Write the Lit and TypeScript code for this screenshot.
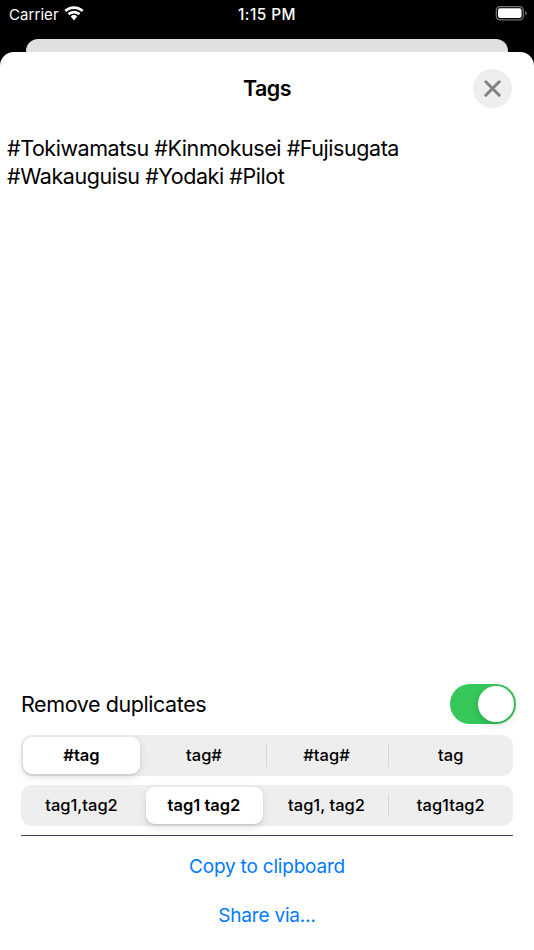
import { LitElement, html, css } from "lit";
import { customElement, property, state } from "lit/decorators.js";
import { classMap } from "lit/directives/class-map.js";

@customElement("status-bar")
class StatusBar extends LitElement {
  static styles = css`
    :host {
      display: grid;
      grid-template-columns: 1fr auto 1fr;
      align-items: center;
      height: 27px;
      padding: 0 7px 0 9px;
      color: #fff;
      font-size: 15px;
    }
    .left { display: flex; align-items: center; gap: 5px; letter-spacing: 0.06px; }
    .time { margin-right: 2px; font-size: 15.3px; font-weight: 500; letter-spacing: 0.5px; }
    .left span, .time { padding-top: 1px; }
    .battery { justify-self: end; }
    svg { display: block; }
  `;
  render() {
    return html`
      <div class="left">
        <span>Carrier</span>
        <svg width="20" height="15" viewBox="0 0 20 15" fill="#fff">
          <path d="M10 0.2C13.7 0.2 17.1 1.6 19.6 4.1L17.7 6C15.6 4.1 13 3 10 3S4.4 4.1 2.3 6L0.4 4.1C2.9 1.6 6.3 0.2 10 0.2Z" />
          <path d="M10 4.7C12.4 4.7 14.7 5.6 16.4 7.3L14.5 9.2C13.2 8.1 11.7 7.4 10 7.4S6.8 8.1 5.5 9.2L3.6 7.3C5.3 5.6 7.6 4.7 10 4.7Z" />
          <path d="M10 9.1C11.2 9.1 12.3 9.6 13.2 10.5L10.4 13.9Q10 14.4 9.6 13.9L6.8 10.5C7.7 9.6 8.8 9.1 10 9.1Z" />
        </svg>
      </div>
      <span class="time">1:15 PM</span>
      <svg class="battery" width="32" height="15" viewBox="0 0 32 15">
        <rect x="1.3" y="0.6" width="27" height="13.2" rx="3.6" fill="none" stroke="#777" stroke-width="1.2" />
        <rect x="3" y="2.3" width="23.6" height="9.8" rx="2" fill="#fff" />
        <path d="M30.2 4.9Q31.8 5.7 31.8 7.2T30.2 9.5Z" fill="#777" />
      </svg>
    `;
  }
}

@customElement("segmented-control")
class SegmentedControl extends LitElement {
  @property({ attribute: false }) options: string[] = [];
  @property({ type: Number }) selected = 0;

  static styles = css`
    :host {
      display: grid;
      grid-template-columns: 122.5px 122.5px 122.5px 1fr;
      box-sizing: border-box;
      height: 41px;
      border-radius: 11px;
      background: #eeeeee;
      color: #000;
      font-size: 16.5px;
    }
    button {
      position: relative;
      margin: 2px 3.5px 2px 2px;
      padding: 0 0 1px;
      border: 0;
      border-radius: 9px;
      background: none;
      color: inherit;
      font: inherit;
      font-weight: 500;
      white-space: pre;
    }
    button:last-child { margin-right: 2px; }
    .on {
      background: #fff;
      font-weight: 600;
      box-shadow: 0 3px 8px rgba(0, 0, 0, 0.12), 0 2px 2px rgba(0, 0, 0, 0.06);
    }
    .divided::after {
      content: "";
      position: absolute;
      right: -4px;
      top: 7px;
      width: 1px;
      height: 23px;
      background: #d6d6d7;
    }
  `;
  render() {
    return this.options.map((label, i) => html`
      <button
        class=${classMap({
          on: i === this.selected,
          divided: i < this.options.length - 1 && i !== this.selected && i + 1 !== this.selected,
        })}
        @click=${() => (this.selected = i)}
      >${label}</button>
    `);
  }
}

@customElement("app-root")
class AppRoot extends LitElement {
  @state() private unique = true;

  static styles = css`
    :host {
      display: flex;
      flex-direction: column;
      height: 950px;
      background: #000;
      color: #000;
      font-family: Inter, "Liberation Sans", sans-serif;
      overflow: hidden;
    }
    .behind {
      flex: none;
      height: 13px;
      margin: 12px 26px 0;
      border-radius: 12px 12px 0 0;
      background: #e0e0e0;
    }
    .sheet {
      flex: 1;
      display: flex;
      flex-direction: column;
      border-radius: 14px 14px 0 0;
      background: #fff;
    }
    header {
      display: grid;
      grid-template-columns: 1fr auto 1fr;
      align-items: center;
      height: 74px;
      padding: 0 22px;
    }
    h1 { grid-column: 2; margin: 0 0 2px; font-size: 21.5px; font-weight: 600; letter-spacing: -0.5px; }
    .close {
      justify-self: end;
      display: grid;
      place-items: center;
      width: 39px;
      height: 39px;
      margin-bottom: 1px;
      padding: 0;
      border: 0;
      border-radius: 50%;
      background: #eeeeee;
    }
    .tags {
      flex: 1;
      margin: 0;
      padding: 8px 7px;
      font-size: 21.5px;
      line-height: 28px;
      letter-spacing: -0.45px;
    }
    .controls { display: flex; flex-direction: column; padding: 0 21px; }
    .row {
      display: flex;
      align-items: center;
      justify-content: space-between;
      height: 40px;
      margin: 0 -3px 10.5px 0;
      font-size: 21.5px;
      letter-spacing: -0.42px;
    }
    .switch {
      display: flex;
      justify-content: flex-end;
      box-sizing: border-box;
      width: 66px;
      height: 40px;
      padding: 2px;
      border: 0;
      border-radius: 20px;
      background: #35c759;
    }
    .switch.off { justify-content: flex-start; background: #e9e9ea; }
    .knob {
      width: 36px;
      height: 36px;
      border-radius: 50%;
      background: #fff;
      box-shadow: 0 3px 8px rgba(0, 0, 0, 0.15);
    }
    segmented-control + segmented-control { margin-top: 9px; }
    hr { width: 100%; height: 1px; margin: 9.5px 0 0; border: 0; background: #3b4358; }
    .link {
      height: 49px;
      padding: 0;
      border: 0;
      background: none;
      color: #007aff;
      font: inherit;
      font-size: 19px;
      letter-spacing: -0.2px;
    }
    .links { display: flex; flex-direction: column; padding: 6px 0 10px; }
  `;
  render() {
    return html`
      <status-bar></status-bar>
      <div class="behind"></div>
      <main class="sheet">
        <header>
          <h1>Tags</h1>
          <button class="close" aria-label="Close">
            <svg width="17" height="17" viewBox="0 0 17 17">
              <path d="M1.8 1.8L15.2 15.2M15.2 1.8L1.8 15.2" stroke="#828286" stroke-width="3" stroke-linecap="round" />
            </svg>
          </button>
        </header>
        <p class="tags">#Tokiwamatsu #Kinmokusei #Fujisugata<br />#Wakauguisu #Yodaki #Pilot</p>
        <section class="controls">
          <div class="row">
            <span>Remove duplicates</span>
            <button
              class=${classMap({ switch: true, off: !this.unique })}
              aria-label="Remove duplicates"
              @click=${() => (this.unique = !this.unique)}
            ><span class="knob"></span></button>
          </div>
          <segmented-control .options=${["#tag", "tag#", "#tag#", "tag"]} .selected=${0}></segmented-control>
          <segmented-control .options=${["tag1,tag2", "tag1 tag2", "tag1, tag2", "tag1tag2"]} .selected=${1}></segmented-control>
          <hr />
          <div class="links">
            <button class="link">Copy to clipboard</button>
            <button class="link">Share via...</button>
          </div>
        </section>
      </main>
    `;
  }
}
